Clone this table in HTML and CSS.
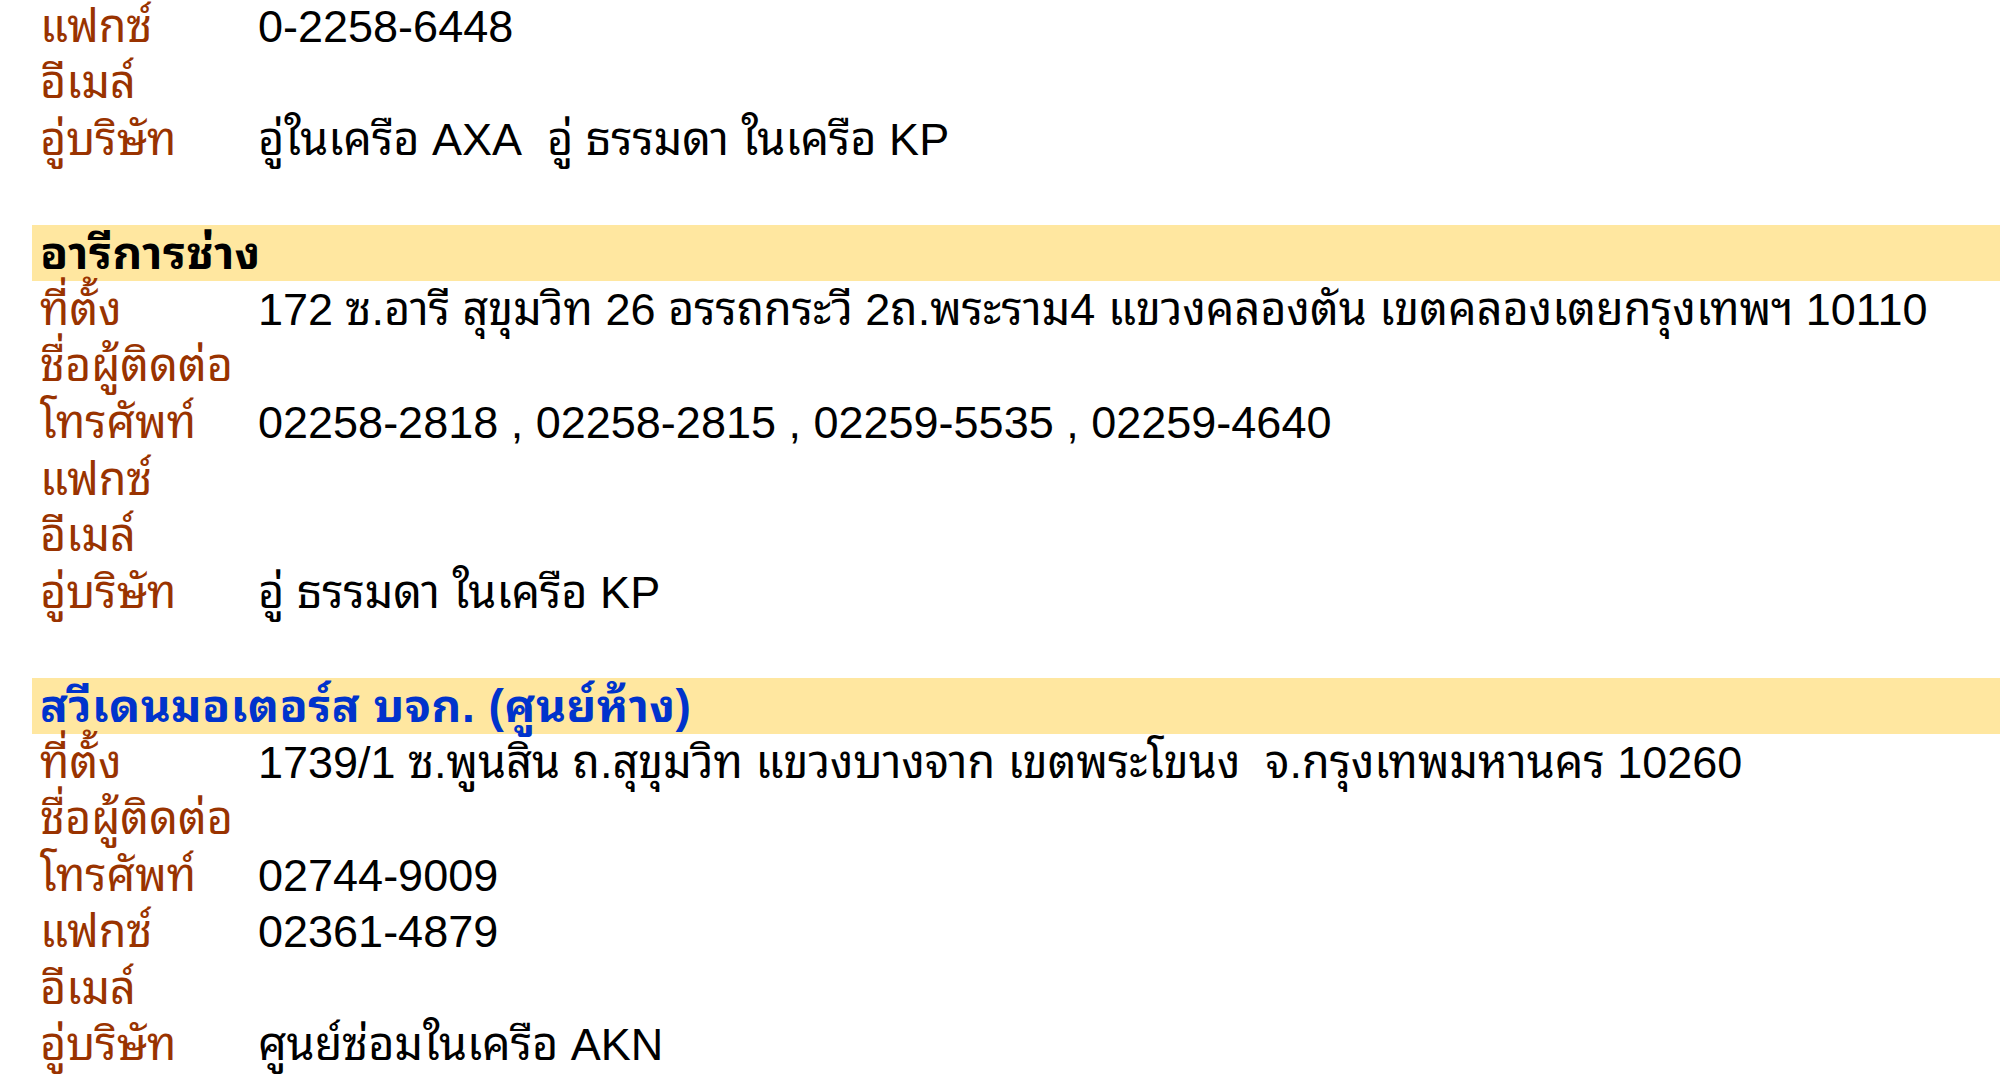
FILE: index.html
```html
<!DOCTYPE html>
<html lang="th">
<head>
    <meta charset="UTF-8">
    <title>รายชื่ออู่ซ่อมรถ</title>
    <link rel="stylesheet" href="styles.css">
</head>
<body>
    <table class="garage-list">
        <!-- อู่ก่อนหน้า (ต่อจากหน้าก่อน) -->
        <tr><td class="label">แฟกซ์</td><td class="value">0-2258-6448</td></tr>
        <tr><td class="label">อีเมล์</td><td class="value"></td></tr>
        <tr><td class="label">อู่บริษัท</td><td class="value">อู่ในเครือ AXA&nbsp; อู่ ธรรมดา ในเครือ KP</td></tr>
        <tr class="spacer"><td colspan="2"></td></tr>

        <!-- อารีการช่าง -->
        <tr class="head"><td colspan="2">อารีการช่าง</td></tr>
        <tr><td class="label">ที่ตั้ง</td><td class="value">172 ซ.อารี สุขุมวิท 26 อรรถกระวี 2ถ.พระราม4 แขวงคลองตัน เขตคลองเตยกรุงเทพฯ 10110</td></tr>
        <tr><td class="label">ชื่อผู้ติดต่อ</td><td class="value"></td></tr>
        <tr><td class="label">โทรศัพท์</td><td class="value">02258-2818 , 02258-2815 , 02259-5535 , 02259-4640</td></tr>
        <tr><td class="label">แฟกซ์</td><td class="value"></td></tr>
        <tr><td class="label">อีเมล์</td><td class="value"></td></tr>
        <tr><td class="label">อู่บริษัท</td><td class="value">อู่ ธรรมดา ในเครือ KP</td></tr>
        <tr class="spacer"><td colspan="2"></td></tr>

        <!-- สวีเดนมอเตอร์ส -->
        <tr class="head center"><td colspan="2">สวีเดนมอเตอร์ส บจก. (ศูนย์ห้าง)</td></tr>
        <tr><td class="label">ที่ตั้ง</td><td class="value">1739/1 ซ.พูนสิน ถ.สุขุมวิท แขวงบางจาก เขตพระโขนง&nbsp; จ.กรุงเทพมหานคร 10260</td></tr>
        <tr><td class="label">ชื่อผู้ติดต่อ</td><td class="value"></td></tr>
        <tr><td class="label">โทรศัพท์</td><td class="value">02744-9009</td></tr>
        <tr><td class="label">แฟกซ์</td><td class="value">02361-4879</td></tr>
        <tr><td class="label">อีเมล์</td><td class="value"></td></tr>
        <tr><td class="label">อู่บริษัท</td><td class="value">ศูนย์ซ่อมในเครือ AKN</td></tr>
    </table>
</body>
</html>
```

FILE: styles.css
```css
body {
    margin: 0;
    background: #fff;
    overflow: hidden;
}

/* ตารางรายชื่ออู่ */
.garage-list {
    margin: -1.5px 0 0 32px;
    width: calc(100% - 32px);
    border-collapse: collapse;
    font-family: "Liberation Sans", "Noto Sans Thai Looped", sans-serif;
    font-size: 45px;
    line-height: 50px;
}

.garage-list td {
    height: 56.6px;
    padding: 0 8px;
    white-space: nowrap;
    vertical-align: middle;
}

.label {
    width: 202px;
    color: #993300;
}

.value {
    color: #000;
}

.head td {
    background: #ffe7a0;
    font-size: 46px;
    font-weight: bold;
    letter-spacing: 0.5px;
    color: #000;
}

/* หัวข้อศูนย์ห้าง */
.head.center td {
    color: #0033cc;
}
```
